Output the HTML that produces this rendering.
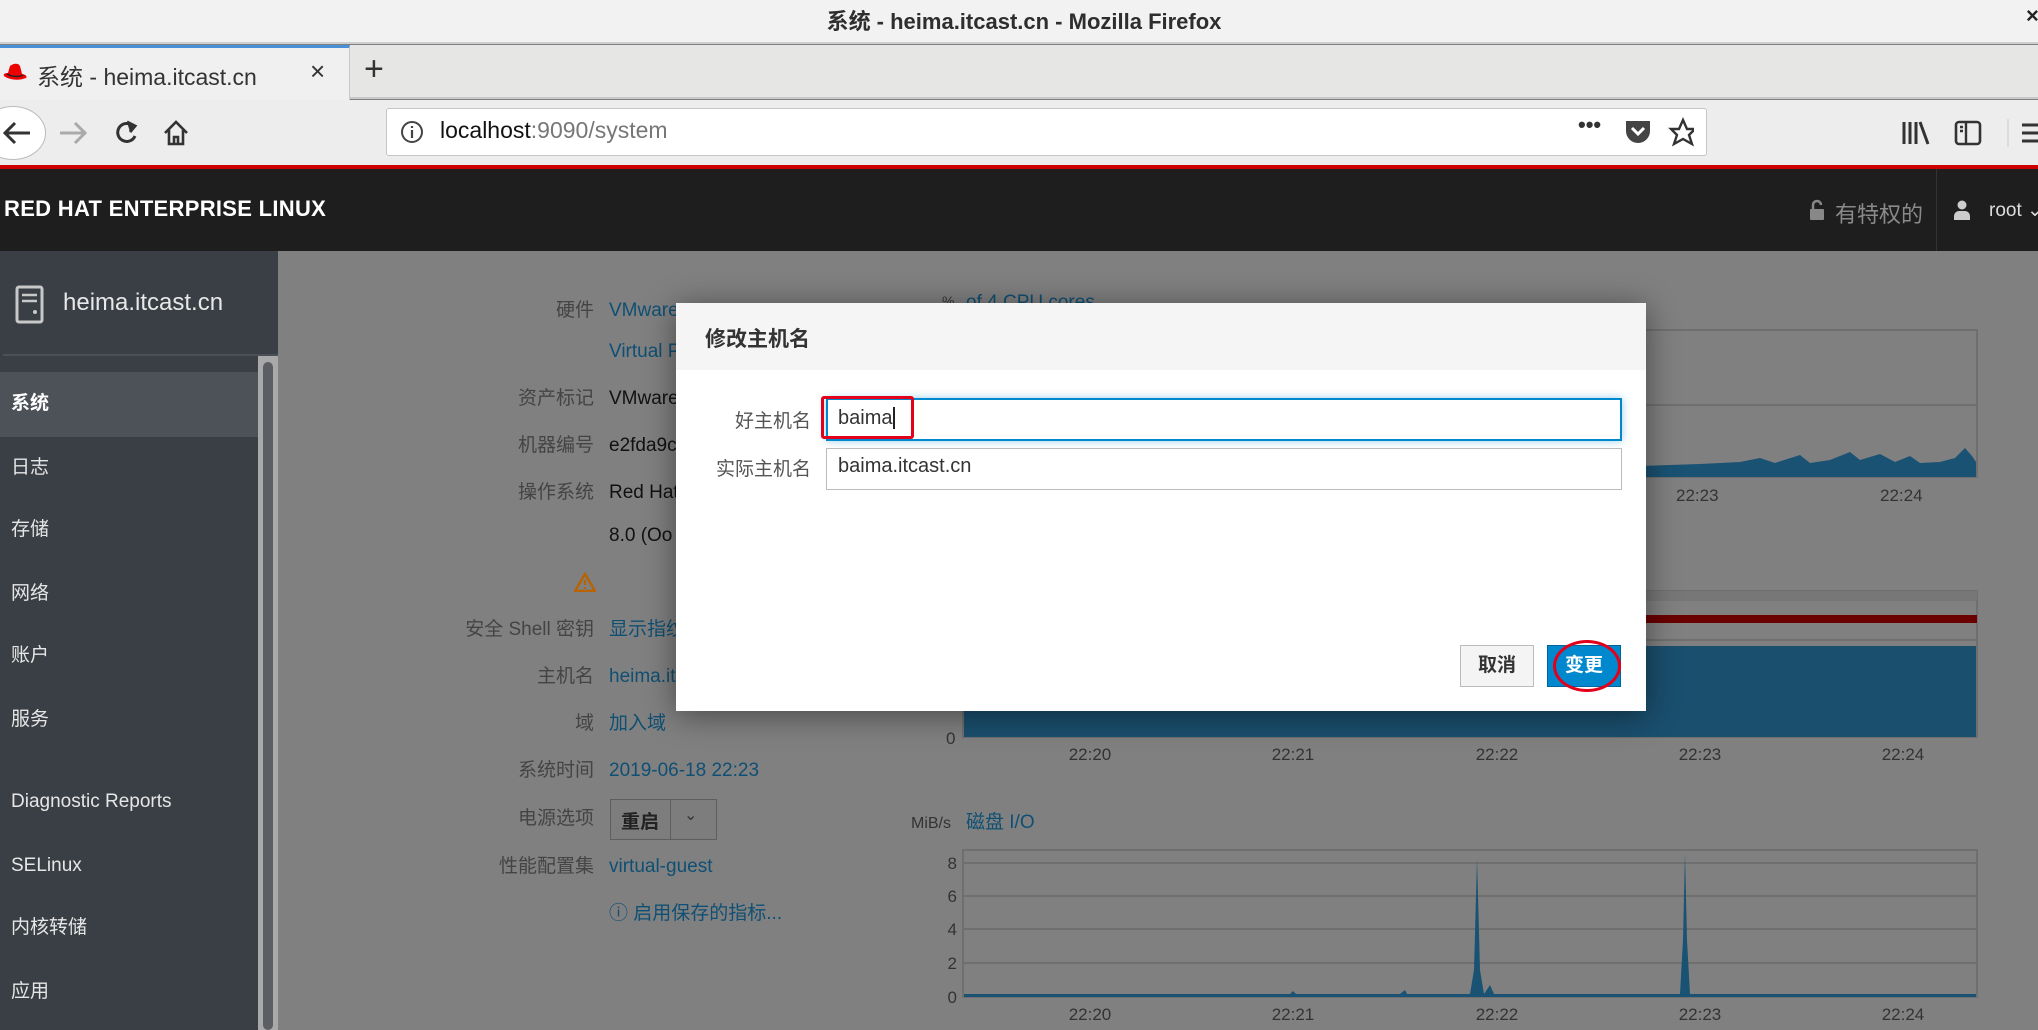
<!DOCTYPE html>
<html style="background:#808080"><head><meta charset="utf-8"><style>
*{margin:0;padding:0;box-sizing:border-box}
body{width:2038px;height:1030px;overflow:hidden;position:relative;background:#808080;font-family:"Liberation Sans","Noto Sans CJK SC",sans-serif;}
.a{position:absolute;white-space:nowrap}
.lb{position:absolute;right:1444px;color:#444;font-size:19px;line-height:24px;text-align:right;white-space:nowrap}
.v{position:absolute;left:609px;color:#111;font-size:19px;line-height:24px;white-space:nowrap}
.lk{color:#0f4f73}
.nav{position:absolute;left:11px;color:#e6e6e6;font-size:19px;line-height:24px}
</style></head><body>
<div class="a" style="left:0;top:0;width:2038px;height:1030px;background:#808080"></div>
<!-- title bar -->
<div class="a" style="left:0;top:0;width:2038px;height:44px;background:#f2f2f2;border-bottom:2px solid #cfcfcf"></div>
<div class="a" style="left:0;top:4px;width:2048px;text-align:center;font-size:22px;color:#2e2e2e;font-weight:bold">系统 - heima.itcast.cn - Mozilla Firefox</div>
<div class="a" style="left:2026px;top:3px;font-size:22px;font-weight:bold;color:#222">×</div>
<!-- tab strip -->
<div class="a" style="left:0;top:45px;width:2038px;height:54px;background:#e6e6e5;border-bottom:2px solid #c8c8c8"></div>
<div class="a" style="left:0;top:45px;width:350px;height:55px;background:#f0f0f0;border-top:3px solid #4a90d9;border-right:1px solid #c8c8c8"></div>
<svg class="a" style="left:2px;top:62px" width="28" height="22" viewBox="0 0 28 22"><path d="M2 14 C4 16 14 20 24 16 C26 14 22 12 20 12 L18 4 C16 0 10 2 8 4 L6 11 C3 11 1 12 2 14Z" fill="#e00"/><path d="M5 12 C10 15 18 15 21 13" stroke="#222" stroke-width="1.5" fill="none"/></svg>
<div class="a" style="left:37px;top:58px;font-size:23px;color:#333">系统 - heima.itcast.cn</div>
<div class="a" style="left:310px;top:56px;font-size:26px;color:#333">×</div>
<div class="a" style="left:364px;top:50px;font-size:34px;color:#333">+</div>
<!-- nav bar -->
<div class="a" style="left:0;top:100px;width:2038px;height:65px;background:#ededed"></div>
<div class="a" style="left:-20px;top:106px;width:66px;height:54px;border-radius:50%;background:#fff;border:1px solid #bbb"></div>
<svg class="a" style="left:0;top:116px" width="200" height="34"><g fill="none" stroke-width="3"><path d="M30 17H6M15 7L5 17L15 27" stroke="#333"/><path d="M60 17H84M75 7L85 17L75 27" stroke="#aaa"/><path d="M133 10A9 9 0 1 0 135 20" stroke="#333"/><path d="M127 6L135 10L130 16" stroke="#333" fill="#333"/><path d="M165 17L176 6L187 17M169 14V28H183V14M174 28V21H178V28" stroke="#333" stroke-width="2.6"/></g></svg>
<div class="a" style="left:386px;top:108px;width:1321px;height:48px;background:#fff;border:1px solid #c5c5c5;border-radius:3px"></div>
<svg class="a" style="left:399px;top:119px" width="26" height="26"><circle cx="13" cy="13" r="10" fill="none" stroke="#444" stroke-width="2"/><path d="M13 11V19M13 7V9" stroke="#444" stroke-width="2.2"/></svg>
<div class="a" style="left:440px;top:117px;font-size:23px;color:#111">localhost<span style="color:#777">:9090/system</span></div>
<div class="a" style="left:1578px;top:112px;font-size:22px;color:#333;font-weight:bold">•••</div>
<svg class="a" style="left:1624px;top:117px" width="70" height="30"><path d="M2 4H26V14A12 12 0 0 1 2 14Z" fill="#444"/><path d="M8 11L14 17L20 11" stroke="#fff" stroke-width="3" fill="none"/><path d="M59 3L63 12L71 12L65 18L68 27L59 22L50 27L53 18L47 12L55 12Z" fill="none" stroke="#333" stroke-width="2.4"/></svg>
<svg class="a" style="left:1902px;top:119px" width="136" height="28"><path d="M2 3V25M8 3V25M14 3V25M18 3L26 25" stroke="#333" stroke-width="3"/><rect x="54" y="3" width="24" height="22" rx="3" fill="none" stroke="#333" stroke-width="2.6"/><path d="M64 3V25M58 8H61M58 12H61" stroke="#333" stroke-width="2.4"/><path d="M106 -6V40" stroke="#ccc"/><path d="M120 6H136M120 14H136M120 22H136" stroke="#333" stroke-width="3"/></svg>
<!-- red line + header -->
<div class="a" style="left:0;top:165px;width:2038px;height:4px;background:#c00"></div>
<div class="a" style="left:0;top:169px;width:2038px;height:82px;background:#1e1e1e"></div>
<div class="a" style="left:4px;top:196px;font-size:22px;font-weight:bold;color:#fff;letter-spacing:.3px">RED HAT ENTERPRISE LINUX</div>
<svg class="a" style="left:1809px;top:199px" width="16" height="22"><path d="M4 10V6A4 4 0 0 1 12 6" stroke="#888" stroke-width="2.5" fill="none"/><rect x="1" y="10" width="14" height="11" rx="1" fill="#888"/></svg>
<div class="a" style="left:1835px;top:197px;font-size:22px;color:#8a8a8a">有特权的</div>
<div class="a" style="left:1936px;top:169px;width:1px;height:82px;background:#333"></div>
<svg class="a" style="left:1954px;top:200px" width="16" height="20"><circle cx="8" cy="5" r="4.5" fill="#ccc"/><path d="M0 20V16A5 5 0 0 1 5 11H11A5 5 0 0 1 16 16V20Z" fill="#ccc"/></svg>
<div class="a" style="left:1989px;top:199px;font-size:19px;color:#ddd">root ⌄</div>
<!-- sidebar -->
<div class="a" style="left:0;top:251px;width:278px;height:779px;background:#393f44"></div>
<div class="a" style="left:3px;top:354px;width:275px;height:2px;background:#4a5056"></div>
<div class="a" style="left:0;top:372px;width:258px;height:65px;background:#4d5258"></div>
<div class="a" style="left:258px;top:356px;width:20px;height:674px;background:#a9a9a9"></div>
<div class="a" style="left:263px;top:362px;width:10px;height:668px;background:#5b5f63;border-radius:5px"></div>
<svg class="a" style="left:15px;top:285px" width="30" height="40"><rect x="2" y="2" width="25" height="35" rx="2" fill="none" stroke="#c8c8c8" stroke-width="3"/><path d="M7 10H22M7 16H22" stroke="#c8c8c8" stroke-width="2.5"/><circle cx="20" cy="27" r="2" fill="#c8c8c8"/></svg>
<div class="a" style="left:63px;top:289px;font-size:24px;color:#e8e8e8">heima.itcast.cn</div>
<div class="nav" style="top:392px;font-weight:bold;color:#fff">系统</div>
<div class="nav" style="top:456px">日志</div>
<div class="nav" style="top:518px">存储</div>
<div class="nav" style="top:582px">网络</div>
<div class="nav" style="top:644px">账户</div>
<div class="nav" style="top:708px">服务</div>
<div class="nav" style="top:790px">Diagnostic Reports</div>
<div class="nav" style="top:854px">SELinux</div>
<div class="nav" style="top:916px">内核转储</div>
<div class="nav" style="top:980px">应用</div>
<!-- content behind -->
<div class="lb" style="top:299px">硬件</div><div class="v lk" style="top:299px">VMware</div>
<div class="v lk" style="top:340px">Virtual P</div>
<div class="lb" style="top:387px">资产标记</div><div class="v" style="top:387px">VMware</div>
<div class="lb" style="top:434px">机器编号</div><div class="v" style="top:434px">e2fda9c</div>
<div class="lb" style="top:481px">操作系统</div><div class="v" style="top:481px">Red Hat</div>
<div class="v" style="top:524px">8.0 (Oo</div>
<svg class="a" style="left:574px;top:572px" width="22" height="20"><path d="M11 2L21 19H1Z" fill="none" stroke="#b86200" stroke-width="2.4"/><path d="M11 8V13M11 15V17" stroke="#b86200" stroke-width="2.2"/></svg>
<div class="lb" style="top:618px">安全 Shell 密钥</div><div class="v lk" style="top:618px">显示指纹</div>
<div class="lb" style="top:665px">主机名</div><div class="v lk" style="top:665px">heima.it</div>
<div class="lb" style="top:712px">域</div><div class="v lk" style="top:712px">加入域</div>
<div class="lb" style="top:759px">系统时间</div><div class="v lk" style="top:759px">2019-06-18 22:23</div>
<div class="lb" style="top:807px">电源选项</div>
<div class="a" style="left:610px;top:799px;width:107px;height:41px;border:1px solid #5e5e5e;background:#7d7d7d"></div>
<div class="a" style="left:670px;top:800px;width:1px;height:39px;background:#5e5e5e"></div>
<div class="a" style="left:621px;top:807px;font-size:19px;font-weight:bold;color:#222">重启</div>
<div class="a" style="left:684px;top:805px;font-size:16px;color:#333">⌄</div>
<div class="lb" style="top:855px">性能配置集</div><div class="v lk" style="top:855px">virtual-guest</div>
<div class="v lk" style="top:902px">ⓘ 启用保存的指标...</div>
<!-- charts -->
<svg class="a" style="left:0;top:0" width="2038" height="1030" font-family="Liberation Sans, sans-serif" font-size="17" fill="#333">
<text x="942" y="306" font-size="14" fill="#333">%</text><text x="966" y="308" font-size="19" fill="#0f4f73">of 4 CPU cores</text>
<rect x="963" y="330" width="1014" height="147" fill="none" stroke="#6f6f6f" stroke-width="2"/>
<line x1="963" y1="405" x2="1977" y2="405" stroke="#6f6f6f" stroke-width="2"/>
<path d="M964 477 L964 470 L1100 468 L1300 468 L1400 467 L1500 466 L1560 466 L1580 462 L1600 465 L1640 466 L1700 464 L1740 462 L1760 458 L1775 463 L1800 455 L1810 463 L1830 460 L1850 452 L1860 460 L1880 454 L1895 462 L1910 456 L1920 463 L1940 462 L1955 458 L1965 448 L1972 456 L1976 462 L1976 477Z" fill="#1a5273"/>
<text x="1676" y="501">22:23</text><text x="1880" y="501">22:24</text>
<rect x="963" y="591" width="1014" height="146" fill="none" stroke="#6f6f6f" stroke-width="2"/>
<rect x="963" y="591" width="1014" height="10" fill="#777"/>
<rect x="963" y="615" width="1014" height="8" fill="#6a0000"/>
<line x1="963" y1="640" x2="1977" y2="640" stroke="#6f6f6f" stroke-width="2"/>
<rect x="964" y="646" width="1012" height="91" fill="#1a4f6e"/>
<text x="946" y="744">0</text>
<g text-anchor="middle"><text x="1090" y="760">22:20</text><text x="1293" y="760">22:21</text><text x="1497" y="760">22:22</text><text x="1700" y="760">22:23</text><text x="1903" y="760">22:24</text></g>
<text x="911" y="828" font-size="16">MiB/s</text><text x="966" y="828" font-size="19" fill="#0f4f73">磁盘 I/O</text>
<rect x="963" y="850" width="1014" height="147" fill="none" stroke="#6f6f6f" stroke-width="2"/>
<g stroke="#6f6f6f" stroke-width="2"><line x1="963" y1="863" x2="1977" y2="863"/><line x1="963" y1="896" x2="1977" y2="896"/><line x1="963" y1="929" x2="1977" y2="929"/><line x1="963" y1="963" x2="1977" y2="963"/></g>
<g text-anchor="end"><text x="957" y="869">8</text><text x="957" y="902">6</text><text x="957" y="935">4</text><text x="957" y="969">2</text><text x="957" y="1003">0</text></g>
<path d="M964 997 L964 994 L1290 994 L1293 991 L1296 994 L1400 994 L1405 990 L1407 994 L1470 994 L1474 970 L1477 859 L1480 970 L1484 994 L1490 985 L1494 994 L1680 994 L1683 940 L1685 853 L1687 940 L1690 994 L1976 994 L1976 997Z" fill="#1a5273"/>
<g text-anchor="middle"><text x="1090" y="1020">22:20</text><text x="1293" y="1020">22:21</text><text x="1497" y="1020">22:22</text><text x="1700" y="1020">22:23</text><text x="1903" y="1020">22:24</text></g>
</svg>
<!-- modal -->
<div class="a" style="left:676px;top:303px;width:970px;height:408px;background:#fff;box-shadow:0 4px 30px rgba(0,0,0,.45)"></div>
<div class="a" style="left:676px;top:303px;width:970px;height:67px;background:#f5f5f5"></div>
<div class="a" style="left:705px;top:323px;font-size:21px;font-weight:bold;color:#333">修改主机名</div>
<div class="a" style="left:700px;top:406px;width:111px;text-align:right;font-size:19px;color:#555">好主机名</div>
<div class="a" style="left:700px;top:454px;width:111px;text-align:right;font-size:19px;color:#555">实际主机名</div>
<div class="a" style="left:826px;top:398px;width:796px;height:43px;border:2px solid #0088ce;box-shadow:0 0 8px rgba(0,136,206,.4);background:#fff"></div>
<div class="a" style="left:838px;top:407px;font-size:20px;color:#333">baima<span style="border-left:2px solid #222;margin-left:1px"></span></div>
<div class="a" style="left:821px;top:396px;width:93px;height:43px;border:3px solid #e3001b;border-radius:3px"></div>
<div class="a" style="left:826px;top:448px;width:796px;height:42px;border:1px solid #bbb;background:#fff"></div>
<div class="a" style="left:838px;top:455px;font-size:20px;color:#333">baima.itcast.cn</div>
<div class="a" style="left:1460px;top:645px;width:74px;height:42px;background:#f4f4f4;border:1px solid #bbb;font-size:19px;font-weight:bold;color:#333;text-align:center;line-height:40px">取消</div>
<div class="a" style="left:1547px;top:645px;width:74px;height:42px;background:#0088ce;border:1px solid #00659c;font-size:19px;font-weight:bold;color:#fff;text-align:center;line-height:40px">变更</div>
<div class="a" style="left:1553px;top:640px;width:68px;height:52px;border:3px solid #e3001b;border-radius:50%"></div>
</body></html>
